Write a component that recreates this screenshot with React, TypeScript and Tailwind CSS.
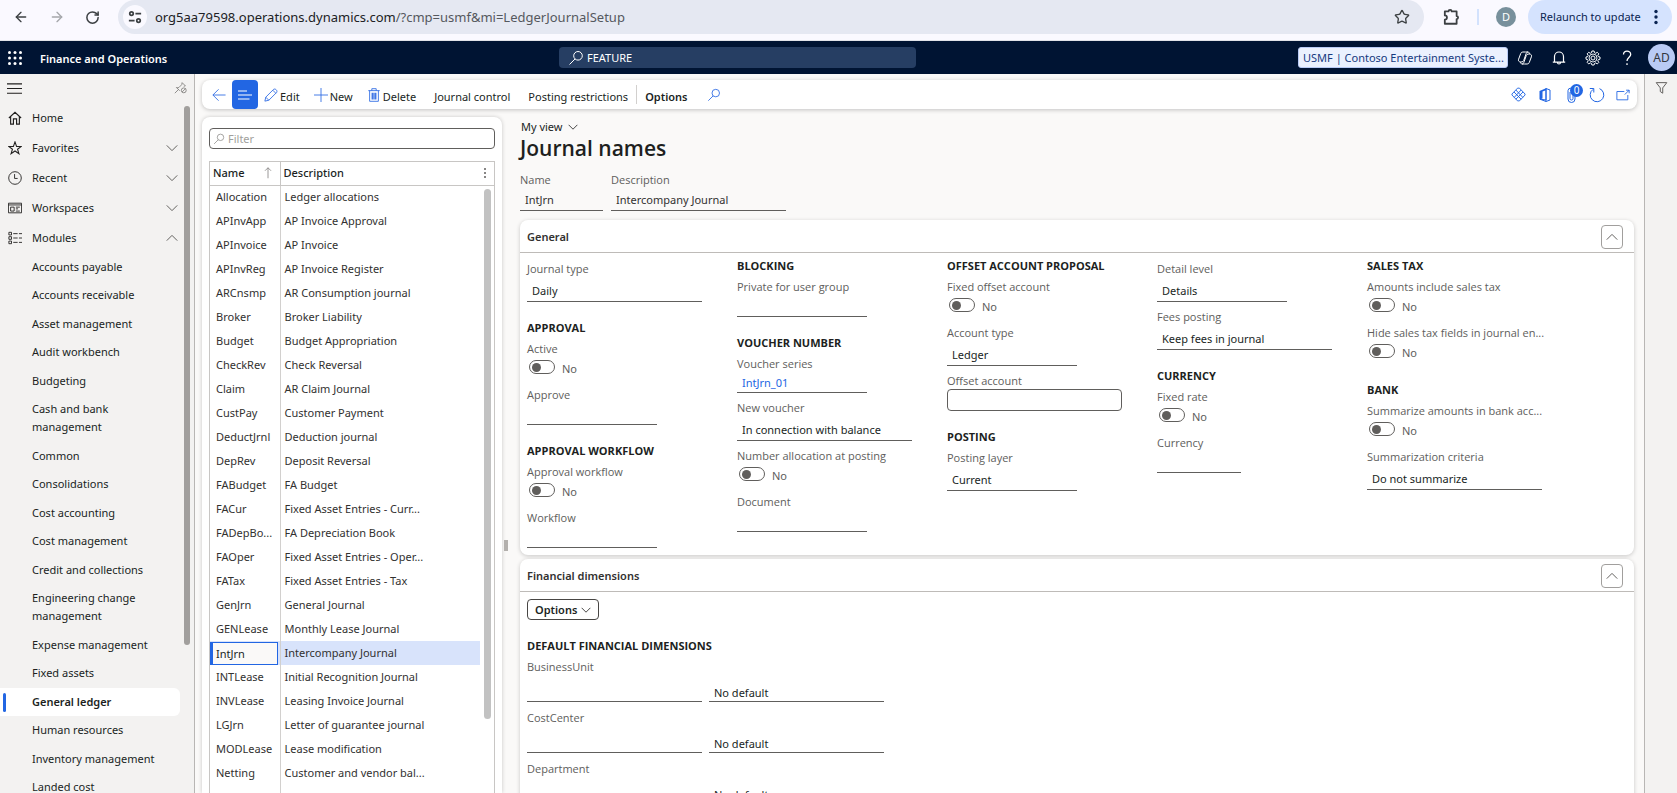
import React, { useState } from 'react';
import { ArrowLeft, ArrowRight, RotateCw, Star } from 'lucide-react';

const modules = [
  'Accounts payable',
  'Accounts receivable',
  'Asset management',
  'Audit workbench',
  'Budgeting',
  'Cash and bank management',
  'Common',
  'Consolidations',
  'Cost accounting',
  'Cost management',
  'Credit and collections',
  'Engineering change management',
  'Expense management',
  'Fixed assets',
  'General ledger',
  'Human resources',
  'Inventory management',
  'Landed cost',
];

const journals = [
  ['Allocation', 'Ledger allocations'],
  ['APInvApp', 'AP Invoice Approval'],
  ['APInvoice', 'AP Invoice'],
  ['APInvReg', 'AP Invoice Register'],
  ['ARCnsmp', 'AR Consumption journal'],
  ['Broker', 'Broker Liability'],
  ['Budget', 'Budget Appropriation'],
  ['CheckRev', 'Check Reversal'],
  ['Claim', 'AR Claim Journal'],
  ['CustPay', 'Customer Payment'],
  ['DeductJrnl', 'Deduction journal'],
  ['DepRev', 'Deposit Reversal'],
  ['FABudget', 'FA Budget'],
  ['FACur', 'Fixed Asset Entries - Curr...'],
  ['FADepBo...', 'FA Depreciation Book'],
  ['FAOper', 'Fixed Asset Entries - Oper...'],
  ['FATax', 'Fixed Asset Entries - Tax'],
  ['GenJrn', 'General Journal'],
  ['GENLease', 'Monthly Lease Journal'],
  ['IntJrn', 'Intercompany Journal'],
  ['INTLease', 'Initial Recognition Journal'],
  ['INVLease', 'Leasing Invoice Journal'],
  ['LGJrn', 'Letter of guarantee journal'],
  ['MODLease', 'Lease modification'],
  ['Netting', 'Customer and vendor bal...'],
  ['Payroll', 'Payroll journal'],
];

interface IconProps {
  className?: string;
  children: React.ReactNode;
}

// Line icon on a 16px grid
const Icon: React.FC<IconProps> = ({ className = 'size-4', children }) => (
  <svg viewBox="0 0 16 16" fill="none" stroke="currentColor" className={`shrink-0 ${className}`} aria-hidden="true">
    {children}
  </svg>
);

const SearchIcon = ({ className }: { className?: string }) => (
  <Icon className={className}>
    <circle cx="10" cy="5.8" r="4.3" />
    <path d="M7 9 1.5 14.5" />
  </Icon>
);

const Chevron = ({ up = false, className = 'size-3' }: { up?: boolean; className?: string }) => (
  <Icon className={className}>
    <path strokeWidth="1.300" d={up ? 'M1 11.500 8 4.500l7 7' : 'M1 4.500l7 7 7-7'} />
  </Icon>
);

const ChromeBar = () => (
  <div className="flex h-[41px] shrink-0 items-start border-b border-[#e1e3e9] bg-[#faf9ff] text-[#3c4043]">
    <div className="flex h-[34px] w-[118px] shrink-0 items-center gap-5 pl-[13px]">
      <button aria-label="Back"><ArrowLeft size={16} strokeWidth={2} /></button>
      <button aria-label="Forward" className="text-[#a5a7ab]"><ArrowRight size={16} strokeWidth={2} /></button>
      <button aria-label="Reload"><RotateCw size={15} strokeWidth={2.4} /></button>
    </div>
    <div className="flex h-[34px] flex-1 items-center rounded-full bg-[#e5e8f2] pr-4 pl-[5px]">
      <button aria-label="Site information" className="flex size-6 items-center justify-center rounded-full bg-[#faf9ff]">
        <Icon className="size-[14px]">
          <g strokeWidth="2">
            <circle cx="4" cy="4" r="2" />
            <path d="M8.5 4H15M1 12h6.5" />
            <circle cx="12" cy="12" r="2" />
          </g>
        </Icon>
      </button>
      <span className="ml-2 flex-1 text-[13px] text-[#202124]">
        org5aa79598.operations.dynamics.com
        <span className="text-[#55585e]">/?cmp=usmf&amp;mi=LedgerJournalSetup</span>
      </span>
      <button aria-label="Bookmark" className="mr-[-2px]"><Star size={16} strokeWidth={2} /></button>
    </div>
    <div className="flex h-[34px] shrink-0 items-center pr-[5px] pl-[18px]">
      <button aria-label="Extensions">
        <Icon className="size-[18px]">
          <path
            strokeWidth="1.600"
            strokeLinejoin="round"
            d="M2.500 3h3.300a1.400 1.400 0 0 1 2.800 0H13v4.200a1.300 1.300 0 0 1 0 2.600V14H2.500v-3.600a1.900 1.900 0 0 0 0-3.800z"
          />
        </Icon>
      </button>
      <span className="mx-[17px] h-4 w-[2px] bg-[#d3e2fd]" />
      <span className="flex size-5 items-center justify-center rounded-full bg-[#78909c] text-[11px] text-white">D</span>
      <button className="ml-3 flex h-[34px] w-36 items-center justify-between rounded-full bg-[#d5e3fe] pr-[14px] pl-3 text-[11px] text-[#0a2351]">
        Relaunch to update
        <svg viewBox="0 0 4 16" fill="currentColor" className="h-4 w-1" aria-hidden="true">
          <circle cx="2" cy="2.500" r="1.700" />
          <circle cx="2" cy="8" r="1.700" />
          <circle cx="2" cy="13.500" r="1.700" />
        </svg>
      </button>
    </div>
  </div>
);

const NavBar = () => (
  <header className="flex h-[33px] shrink-0 items-center bg-[#001433] text-white">
    <div className="flex w-[559px] shrink-0 items-center pl-2">
      <button aria-label="App launcher">
        <svg viewBox="0 0 14 14" fill="currentColor" className="size-[14px]" aria-hidden="true">
          {[1.5, 7, 12.5].map((y) => [1.5, 7, 12.5].map((x) => <circle key={`${x}-${y}`} cx={x} cy={y} r="1.500" />))}
        </svg>
      </button>
      <h2 className="ml-[18px] pt-[2px] text-[11px] font-semibold">Finance and Operations</h2>
    </div>
    <label className="flex h-[21px] w-[357px] items-center rounded bg-[#263e63] pl-[9px]">
      <SearchIcon className="size-4" />
      <input aria-label="Search" defaultValue="FEATURE" className="ml-[3px] w-full bg-transparent text-[11px] outline-none" />
    </label>
    <div className="ml-auto flex items-center pr-[2px]">
      <button className="h-[21px] w-[210px] rounded-[3px] border border-[#b9cbf5] bg-[#ebf1fe] pl-1 text-left text-[11px] leading-[18px] text-[#163a80]">
        USMF | Contoso Entertainment Syste...
      </button>
      <button aria-label="Copilot" className="ml-[9px]">
        <Icon className="size-4">
          <path d="M8.500 2H5.800A2.200 2.200 0 0 0 3.700 3.600L1.600 9.200c-.6 1.500.3 2.700 1.700 2.700h1.500c.9 0 1.600-.5 1.900-1.400l2.500-7C9.500 2.600 10.200 2 11 2H8.500M7.500 14h2.700a2.200 2.200 0 0 0 2.100-1.600l2.100-5.600c.6-1.500-.3-2.700-1.700-2.700h-1.500c-.9 0-1.600.5-1.900 1.400l-2.500 7C6.500 13.400 5.800 14 5 14h2.500" />
          <path d="M11 2c1 0 1.200.8 1.500 2M5 14c-1 0-1.200-.8-1.500-2" />
        </Icon>
      </button>
      <button aria-label="Notifications" className="ml-[18px]">
        <Icon className="size-4">
          <path strokeWidth="1.200" d="M1.800 12.200h12.400M3.500 12V6.500a4.500 4.500 0 0 1 9 0V12M6.500 12.500a1.500 1.500 0 0 0 3 0" />
        </Icon>
      </button>
      <button aria-label="Settings" className="ml-[18px]">
        <Icon className="size-4">
          <circle cx="8" cy="8" r="2" />
          <path
            strokeLinejoin="round"
            d="M6.900 1h2.200l.4 1.800 1.200.5 1.600-1 1.500 1.500-1 1.600.5 1.200 1.700.4v2.200l-1.700.4-.5 1.200 1 1.600-1.500 1.500-1.600-1-1.200.5L9.100 15H6.900l-.4-1.600-1.200-.5-1.600 1-1.500-1.500 1-1.600-.5-1.200L1 9.200V7l1.700-.4.5-1.200-1-1.600 1.500-1.500 1.600 1 1.200-.5z"
          />
          <circle cx="8" cy="8" r="4" strokeWidth="0.900" />
        </Icon>
      </button>
      <button aria-label="Help" className="ml-[18px]">
        <Icon className="size-4">
          <path strokeWidth="1.300" d="M4.500 4.500C4.500 2.300 6 1.200 8 1.200s3.700 1.200 3.700 3.200C11.700 7 8 7.500 8 11M8 13.300v1.700" />
        </Icon>
      </button>
      <span className="ml-[13px] flex size-[27px] items-center justify-center rounded-full bg-[#b9cbf5] text-[12px] text-[#33363d]">
        AD
      </span>
    </div>
  </header>
);

interface NavRowProps {
  label: string;
  icon: React.ReactNode;
  open?: boolean;
}

const NavRow: React.FC<NavRowProps> = ({ label, icon, open }) => (
  <button className="flex h-[30px] w-full items-center pr-[2px] pl-2 text-left">
    <Icon className="size-[14px]">{icon}</Icon>
    <span className="ml-[10px] flex-1">{label}</span>
    {open !== undefined && <Chevron up={open} className="size-3 text-[#605e5c]" />}
  </button>
);

const Sidebar = () => (
  <nav className="flex w-[195px] shrink-0 overflow-hidden border-r border-[#b8b6b4] bg-[#f3f2f1] text-[#201f1e]">
    <div className="min-w-0 flex-1">
      <div className="flex h-[29px] items-center pl-[7px]">
        <button aria-label="Collapse menu">
          <Icon className="size-[15px]">
            <path d="M0 3h16M0 8h16M0 13h16" strokeWidth="1.200" />
          </Icon>
        </button>
      </div>
      <NavRow
        label="Home"
        icon={<path strokeWidth="1.300" d="M1 8 8 1.500 15 8M3 6.500V15h3.200V9h3.600v6H13V6.500" />}
      />
      <NavRow
        label="Favorites"
        open={false}
        icon={<path strokeWidth="1.200" d="m8 1 1.800 5.200h5.400L10.900 9.400l1.600 5.100L8 11.400l-4.500 3.100 1.600-5.100L.8 6.200h5.400z" />}
      />
      <NavRow label="Recent" open={false} icon={<path d="M15.200 8A7.200 7.200 0 1 1 .8 8a7.200 7.200 0 0 1 14.400 0zM7.500 3.500v5H11" />} />
      <NavRow label="Workspaces" open={false} icon={<path d="M.5 2.500h15v11H.5zM.5 4.500h15M3 7h4v4.500H3zM9 7h4.500M9 9h2.500M9 11.500h4.500" />} />
      <NavRow
        label="Modules"
        open
        icon={<path d="M1 1.500h3v3H1zM1 6.500h3v3H1zM1 11.500h3v3H1zM6 3h5M12.500 3H16M6 8h5M12.500 8H16M6 13h5M12.500 13H16" />}
      />
      <ul>
        {modules.map((name) => {
          const current = name === 'General ledger';
          return (
            <li key={name} className={`relative py-[5px] leading-[18px] even:pb-[6px] ${current ? 'rounded-r-md bg-white font-semibold' : ''}`}>
              {current && <span className="absolute top-[5px] left-[3px] h-[19px] w-[3px] rounded-full bg-[#2266e3]" />}
              <a href="#" className="ml-8 block w-[128px]">{name}</a>
            </li>
          );
        })}
      </ul>
    </div>
    <div className="flex w-[14px] shrink-0 flex-col">
      <div className="h-[32px] pt-[7px]">
        <button aria-label="Unpin menu" className="-ml-[6px] block text-[#797775]">
          <Icon className="size-[13px]">
            <path d="M1 15l4.500-4.500M2.500 7.500l4.500 4.500M3.500 8.500l2.500-.5L9.500 4.500l.5-2.500 4 4-2 .5" />
            <circle cx="12" cy="11.500" r="3" />
            <path d="m10 13.500 4-4" />
          </Icon>
        </button>
      </div>
      <span className="ml-[4px] h-[539px] w-[6px] rounded-full bg-[#a19f9d]" />
    </div>
  </nav>
);

const Toolbar = () => (
  <div className="flex h-[29px] shrink-0 items-center rounded-lg bg-white pr-[7px] pl-[10px] text-[#201f1e] shadow-[0_1px_4px_rgba(0,0,0,0.22)]">
    <button aria-label="Back" className="text-[#2f6be4]">
      <Icon className="size-[14px]"><path d="M15.500 8H1M7.500 1.500 1 8l6.500 6.500" /></Icon>
    </button>
    <button aria-label="Show list" className="ml-[6px] flex h-[29px] w-[26px] items-center justify-center rounded-[4px] bg-[#2266e3] text-white">
      <Icon><path strokeWidth="1.200" d="M1 4h9M1 8h14M1 12h11.500" /></Icon>
    </button>
    <button className="ml-[6px] flex items-center gap-[2px]">
      <Icon className="size-[14px] text-[#2f6be4]">
        <path d="M1 15l1-4.500L11 1.500c2-1.200 4.700 1.500 3.500 3.500l-9 9zM10 2.500 13.500 6M2 10.500 5.500 14" />
      </Icon>
      <span className="pt-1">Edit</span>
    </button>
    <button className="ml-[14px] flex items-center gap-[2px]">
      <Icon className="size-[14px] text-[#2f6be4]"><path d="M8 0v16M0 8h16" /></Icon>
      <span className="pt-1">New</span>
    </button>
    <button className="ml-[14px] flex items-center gap-[2px]">
      <Icon className="size-[14px] text-[#2f6be4]">
        <path d="M1.500 3h13M5.500 3V.8h5V3M3 3v12.200h10V3" />
        <path strokeWidth="1.500" d="M6 5.500v7.500M8 5.500v7.500M10 5.500v7.500" />
      </Icon>
      <span className="pt-1">Delete</span>
    </button>
    <button className="ml-[18px] pt-1">Journal control</button>
    <button className="ml-[18px] pt-1">Posting restrictions</button>
    <span className="mr-2 ml-[8px] h-[19px] w-px bg-[#d2d0ce]" />
    <button className="pt-1 font-semibold">Options</button>
    <button aria-label="Search actions" className="ml-5 text-[#2f6be4]">
      <SearchIcon className="size-[14px]" />
    </button>
    <div className="ml-auto flex items-center gap-[11px] text-[#2266e3]">
      <button aria-label="Power Apps">
        <Icon className="size-[15px]">
          <path
            strokeLinejoin="round"
            d="M7 1.200h2L15 7.500v1L9 14.800H7L1 8.500v-1zM5.200 3.200 12.500 11M10.800 3.200 3.500 11M12.800 5.300 5.200 13M3.200 5.300 10.800 13"
          />
        </Icon>
      </button>
      <button aria-label="Open in Microsoft Office">
        <Icon>
          <path d="M2.500 4 9 1.300v2L5.500 4.500v7l-3 1z" fill="currentColor" stroke="none" />
          <path d="M9 1.500 13 3v10l-4 1.500-6-2.300L9 13zM9 1.500v13" />
        </Icon>
      </button>
      <button aria-label="Attachments" className="relative">
        <Icon><path d="M6 5v6.500a1.500 1.500 0 0 0 3 0V4a2.500 2.500 0 0 0-5-.5V12a3.500 3.500 0 0 0 7 0V5" /></Icon>
        <span className="absolute -top-[3px] left-[6px] flex size-[13px] items-center justify-center rounded-full bg-[#2266e3] text-[10px] leading-none text-white">
          0
        </span>
      </button>
      <button aria-label="Refresh" className="-ml-[2px]">
        <Icon><path d="M10.500 1.600A6.800 6.800 0 1 1 4 2.400M.8 1.500h4v4" /></Icon>
      </button>
      <button aria-label="Open in new window">
        <Icon className="size-[14px]"><path d="M9.500 4H1v9.500h12.500V8M10 7.500l5-5M11.500 2.500H15V6" /></Icon>
      </button>
    </div>
  </div>
);

const JournalList = () => (
  <section className="flex w-[300px] shrink-0 flex-col overflow-hidden rounded-t-lg bg-white px-[7px] pt-[11px] shadow-[0_0_4px_rgba(0,0,0,0.2)]">
    <label className="flex h-[21px] w-full shrink-0 items-center rounded-[4px] border border-[#605e5c] pl-[3px] text-[#8a8886]">
      <SearchIcon className="size-3" />
      <input aria-label="Filter" placeholder="Filter" className="ml-[3px] w-full bg-transparent outline-none placeholder:text-[#a19f9d]" />
    </label>
    <div className="relative mt-3 flex-1 border border-b-0 border-[#c8c6c4]">
      <table className="w-full table-fixed border-collapse text-left text-[#323130]">
        <colgroup>
          <col className="w-[70px]" />
          <col />
          <col className="w-[14px]" />
        </colgroup>
        <thead>
          <tr className="h-[23px] border-b border-[#c8c6c4] text-[#201f1e]">
            <th className="border-r border-[#c8c6c4] p-0 pr-[6px] pl-[3px] font-medium">
              <span className="flex items-center justify-between">
                Name
                <Icon className="size-3 text-[#797775]"><path d="M8 15V1M4 5l4-4 4 4" /></Icon>
              </span>
            </th>
            <th className="p-0 pl-[3px] font-medium">Description</th>
            <th className="p-0">
              <button aria-label="Grid options" className="block">
                <svg viewBox="0 0 10 12" fill="#605e5c" className="h-3 w-[10px]" aria-hidden="true">
                  <circle cx="5" cy="2" r="1" />
                  <circle cx="5" cy="6" r="1" />
                  <circle cx="5" cy="10" r="1" />
                </svg>
              </button>
            </th>
          </tr>
        </thead>
        <tbody>
          {journals.map(([name, description]) => {
            const selected = name === 'IntJrn';
            return (
              <tr key={name} className="h-6">
                <td className={`border-r border-[#d2d0ce] p-0 whitespace-nowrap ${selected ? 'bg-[#d8e3fb] pr-[2px]' : 'pl-[6px]'}`}>
                  {selected ? (
                    <span className="block h-[23px] border border-l-[3px] border-[#2266e3] bg-[#faf9f8] pl-[3px] leading-[21px] text-[#201f1e]">{name}</span>
                  ) : (
                    name
                  )}
                </td>
                <td className={`p-0 pl-1 whitespace-nowrap ${selected ? 'bg-[#d8e3fb]' : ''}`}>{description}</td>
                <td className="p-0" />
              </tr>
            );
          })}
        </tbody>
      </table>
      <span className="absolute top-[27px] right-[3px] h-[530px] w-[7px] rounded-full bg-[#c2c2c2]" />
    </div>
  </section>
);

const labelClass = 'block h-4 font-[Open_Sans,sans-serif] leading-[16px] whitespace-nowrap text-[#605e5c]';

interface FieldProps {
  label: string;
  value?: string;
  width?: string;
}

// Drop-down value with an underline, no arrow until it is being edited
const SelectField: React.FC<FieldProps> = ({ label, value, width = 'w-[175px]' }) => (
  <label className="block">
    <span className={labelClass}>{label}</span>
    <select className={`block h-[25px] appearance-none border-b border-[#605e5c] bg-transparent pt-1 pl-[5px] text-[#201f1e] outline-none ${width}`}>
      <option>{value}</option>
    </select>
  </label>
);

const TextField: React.FC<FieldProps> = ({ label, value = '', width = 'w-[130px]' }) => (
  <label className="block">
    <span className={labelClass}>{label}</span>
    <input defaultValue={value} className={`block h-[22px] border-b border-[#605e5c] bg-transparent pl-[5px] text-[#201f1e] outline-none ${width}`} />
  </label>
);

const ToggleField: React.FC<FieldProps> = ({ label }) => {
  const [on, setOn] = useState(false);
  return (
    <label className="block">
      <span className={labelClass}>{label}</span>
      <span className="flex h-[23px] items-start pt-[3px] pl-[2px]">
        <input
          type="checkbox"
          role="switch"
          checked={on}
          onChange={() => setOn(!on)}
          className="flex h-[14px] w-[26px] appearance-none items-center rounded-full border border-[#605e5c] px-[2px] before:size-[9px] before:rounded-full before:bg-[#605e5c] checked:justify-end"
        />
        <span className="ml-[7px] pt-[2px] leading-[14px] text-[#605e5c]">{on ? 'Yes' : 'No'}</span>
      </span>
    </label>
  );
};

const Group: React.FC<{ title?: string; children: React.ReactNode }> = ({ title, children }) => (
  <div className="flex flex-col gap-[7px]">
    {title ? (
      <h3 className="-mb-[2px] font-[Open_Sans,sans-serif] leading-[16px] font-bold whitespace-nowrap text-[#201f1e]">{title}</h3>
    ) : (
      <div className="-mb-1" />
    )}
    {children}
  </div>
);

const FastTab: React.FC<{ title: string; children: React.ReactNode; className?: string }> = ({ title, children, className = '' }) => (
  <section className={`shrink-0 rounded-lg bg-white shadow-[0_1px_4px_rgba(0,0,0,0.2)] ${className}`}>
    <div className="flex h-[33px] items-center justify-between border-b border-[#bebbb8] pt-[2px] pr-[11px] pl-[7px]">
      <h2 className="font-semibold text-[#323130]">{title}</h2>
      <button aria-label={`Collapse ${title}`} className="flex h-6 w-[22px] items-center justify-center rounded-[4px] border border-[#a19f9d] text-[#605e5c]">
        <Chevron up />
      </button>
    </div>
    {children}
  </section>
);

const DimensionRow: React.FC<{ label: string }> = ({ label }) => (
  <div>
    <label htmlFor={label} className={labelClass}>{label}</label>
    <div className="flex gap-[7px]">
      <input id={label} className="h-[27px] w-[175px] border-b border-[#605e5c] bg-transparent pl-1 outline-none" />
      <input aria-label={`${label} default`} defaultValue="No default" className="h-[27px] w-[175px] border-b border-[#605e5c] bg-transparent pt-2 pl-[5px] text-[#201f1e] outline-none" />
    </div>
  </div>
);

const JournalDetails = () => (
  <div className="flex min-w-0 flex-1 flex-col pt-[2px] pr-[3px] pb-1">
    <button className="flex h-4 shrink-0 items-center gap-[5px] self-start pl-px text-[#201f1e]">
      My view
      <Chevron className="size-[10px]" />
    </button>
    <h1 className="font-[Open_Sans,sans-serif] text-[21px] leading-[26px] font-semibold text-[#201f1e]">Journal names</h1>
    <div className="mt-[11px] mb-[9px] flex gap-2">
      <label>
        <span className={labelClass}>Name</span>
        <input defaultValue="IntJrn" className="block h-[23px] w-[83px] border-b border-[#605e5c] bg-transparent pt-px pl-[5px] text-[#323130] outline-none" />
      </label>
      <label>
        <span className={labelClass}>Description</span>
        <input defaultValue="Intercompany Journal" className="block h-[23px] w-[175px] border-b border-[#605e5c] bg-transparent pt-px pl-[5px] text-[#323130] outline-none" />
      </label>
    </div>

    <FastTab title="General">
      <div className="flex pt-[5px] pb-[7px] pl-[7px] *:flex *:w-[210px] *:flex-col *:gap-[18px]">
        <div>
          <Group><SelectField label="Journal type" value="Daily" /></Group>
          <Group title="APPROVAL">
            <ToggleField label="Active" />
            <TextField label="Approve" />
          </Group>
          <Group title="APPROVAL WORKFLOW">
            <ToggleField label="Approval workflow" />
            <TextField label="Workflow" />
          </Group>
        </div>
        <div>
          <Group title="BLOCKING"><TextField label="Private for user group" /></Group>
          <Group title="VOUCHER NUMBER">
            <div>
              <span className={labelClass}>Voucher series</span>
              <a href="#" className="block h-[21px] w-[130px] border-b border-[#605e5c] pt-[3px] pl-[5px] text-[#2266e3]">IntJrn_01</a>
            </div>
            <SelectField label="New voucher" value="In connection with balance" />
            <ToggleField label="Number allocation at posting" />
            <TextField label="Document" />
          </Group>
        </div>
        <div>
          <Group title="OFFSET ACCOUNT PROPOSAL">
            <ToggleField label="Fixed offset account" />
            <SelectField label="Account type" value="Ledger" width="w-[130px]" />
            <label className="block">
              <span className={labelClass}>Offset account</span>
              <input className="block h-[22px] w-[175px] rounded-[4px] border border-[#605e5c] px-1 outline-none" />
            </label>
          </Group>
          <Group title="POSTING"><SelectField label="Posting layer" value="Current" width="w-[130px]" /></Group>
        </div>
        <div>
          <Group>
            <SelectField label="Detail level" value="Details" width="w-[130px]" />
            <SelectField label="Fees posting" value="Keep fees in journal" />
          </Group>
          <Group title="CURRENCY">
            <ToggleField label="Fixed rate" />
            <TextField label="Currency" width="w-[84px]" />
          </Group>
        </div>
        <div>
          <Group title="SALES TAX">
            <ToggleField label="Amounts include sales tax" />
            <ToggleField label="Hide sales tax fields in journal en..." />
          </Group>
          <Group title="BANK">
            <ToggleField label="Summarize amounts in bank acc..." />
            <SelectField label="Summarization criteria" value="Do not summarize" />
          </Group>
        </div>
      </div>
    </FastTab>

    <FastTab title="Financial dimensions" className="mt-1">
      <div className="px-[7px] pt-[7px] pb-4">
        <button className="flex h-[21px] items-center gap-1 rounded-[4px] border border-[#484644] px-[7px] font-semibold text-[#201f1e]">
          Options
          <Chevron className="size-[10px]" />
        </button>
        <h3 className="mt-[18px] mb-[5px] font-[Open_Sans,sans-serif] leading-[16px] font-bold text-[#201f1e]">DEFAULT FINANCIAL DIMENSIONS</h3>
        <div className="flex flex-col gap-2">
          <DimensionRow label="BusinessUnit" />
          <DimensionRow label="CostCenter" />
          <DimensionRow label="Department" />
        </div>
      </div>
    </FastTab>
  </div>
);

export default function App() {
  return (
    <div className="flex h-screen flex-col overflow-hidden bg-[#faf9f8] font-[Noto_Sans,Open_Sans,sans-serif] text-[11px] leading-[16px]">
      <ChromeBar />
      <NavBar />
      <div className="flex min-h-0 flex-1">
        <Sidebar />
        <main className="flex min-w-0 flex-1 flex-col px-[7px] pt-[6px]">
          <Toolbar />
          <div className="flex min-h-0 flex-1 pt-2">
            <JournalList />
            {/* Splitter between list and details */}
            <div className="w-[18px] shrink-0 pt-[423px] pl-[2px]">
              <div className="h-[11px] w-1 bg-[#b3b0ad]" />
            </div>
            <JournalDetails />
          </div>
        </main>
        <aside className="w-[33px] shrink-0 border-l border-[#b8b6b4] bg-[#f3f2f1] pt-[7px] pl-[10px] text-[#605e5c]">
          <button aria-label="Filters" className="block">
            <Icon className="size-[13px]"><path strokeWidth="1.200" d="M1.500 2h13L9.500 8.500V15l-3-2V8.500z" /></Icon>
          </button>
        </aside>
      </div>
    </div>
  );
}
